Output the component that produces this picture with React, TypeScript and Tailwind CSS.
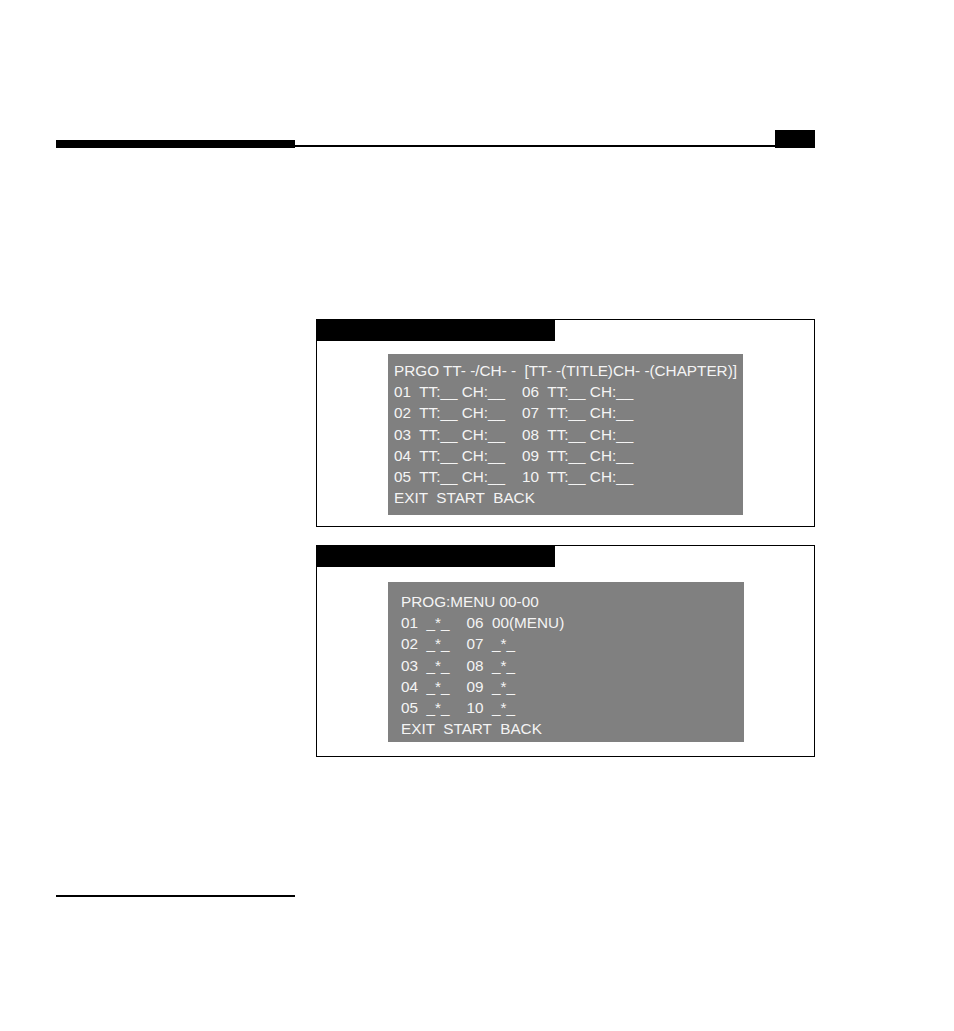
import React from "react";

const progRows = [
    "01  TT:__ CH:__    06  TT:__ CH:__",
    "02  TT:__ CH:__    07  TT:__ CH:__",
    "03  TT:__ CH:__    08  TT:__ CH:__",
    "04  TT:__ CH:__    09  TT:__ CH:__",
    "05  TT:__ CH:__    10  TT:__ CH:__",
];

const menuRows = [
    "01  _*_    06  00(MENU)",
    "02  _*_    07  _*_",
    "03  _*_    08  _*_",
    "04  _*_    09  _*_",
    "05  _*_    10  _*_",
];

function ScreenBox({ children, panelClass }: { children: React.ReactNode; panelClass: string }) {
    return (
        <div className="flex flex-col w-[499px] border border-black">
            <div className="w-[239px] h-[22px] bg-black -mt-px -ml-px" />
            <div className={panelClass}>{children}</div>
        </div>
    );
}

export default function App() {
    return (
        <div className="w-[954px] h-[1031px] bg-white font-['Liberation_Sans',Arial,sans-serif]">
            {/* page header rule */}
            <div className="flex items-end w-[759px] ml-[56px] pt-[130px]">
                <div className="w-[239px] h-[8px] bg-black" />
                <div className="flex-1 h-[2px] bg-black mb-px" />
                <div className="w-[40px] h-[18px] bg-black" />
            </div>

            <div className="flex flex-col gap-[18px] ml-[316px] mt-[171px]">
                <ScreenBox panelClass="ml-[71px] mt-[13px] mb-[11px] w-[355px] h-[161px] bg-[#808080] pl-[6px] pt-[6px] text-[15.3px] leading-[21.2px] text-[#f4f4f4] whitespace-pre">
                    <div>PRGO TT- -/CH- -  [TT- -(TITLE)CH- -(CHAPTER)]</div>
                    {progRows.map((row) => (
                        <div key={row}>{row}</div>
                    ))}
                    <div>EXIT  START  BACK</div>
                </ScreenBox>

                <ScreenBox panelClass="ml-[71px] mt-[15px] mb-[14px] w-[356px] h-[160px] bg-[#808080] pl-[13px] pt-[9px] text-[15.3px] leading-[21.2px] text-[#f4f4f4] whitespace-pre">
                    <div>PROG:MENU 00-00</div>
                    {menuRows.map((row) => (
                        <div key={row}>{row}</div>
                    ))}
                    <div>EXIT  START  BACK</div>
                </ScreenBox>
            </div>

            {/* footnote rule */}
            <div className="w-[239px] h-[2px] bg-black ml-[56px] mt-[138px]" />
        </div>
    );
}
